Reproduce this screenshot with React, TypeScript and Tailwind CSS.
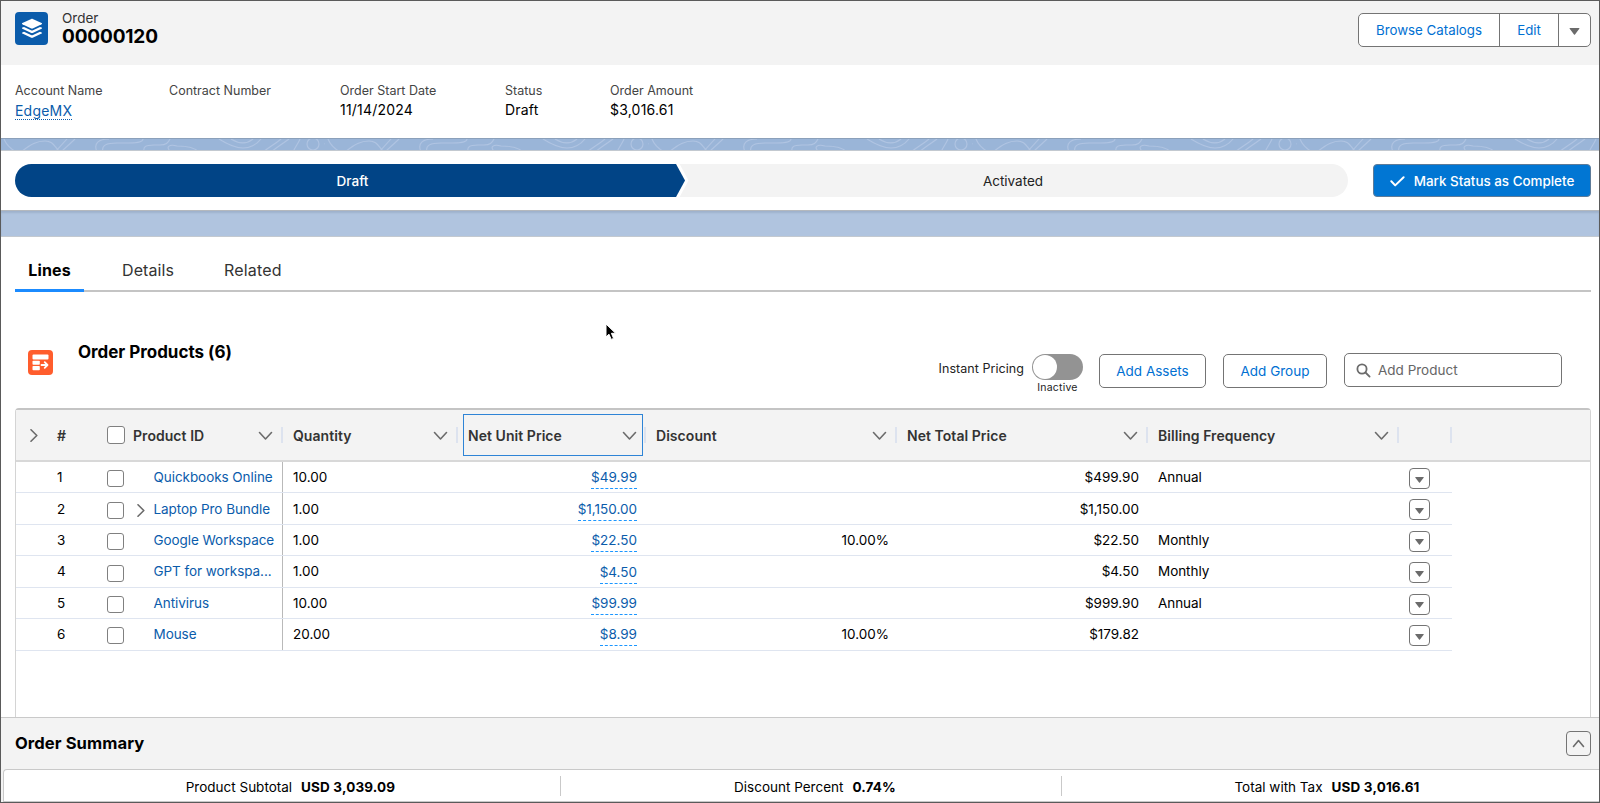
import React from 'react';
import { clsx } from 'clsx';

interface LineItem {
    id: number;
    product: string;
    quantity: string;
    unitPrice: string;
    discount?: string;
    total: string;
    billing?: string;
    bundle?: boolean;
}

const LINES: LineItem[] = [
    { id: 1, product: 'Quickbooks Online', quantity: '10.00', unitPrice: '$49.99', total: '$499.90', billing: 'Annual' },
    { id: 2, product: 'Laptop Pro Bundle', quantity: '1.00', unitPrice: '$1,150.00', total: '$1,150.00', bundle: true },
    { id: 3, product: 'Google Workspace', quantity: '1.00', unitPrice: '$22.50', discount: '10.00%', total: '$22.50', billing: 'Monthly' },
    { id: 4, product: 'GPT for workspa...', quantity: '1.00', unitPrice: '$4.50', total: '$4.50', billing: 'Monthly' },
    { id: 5, product: 'Antivirus', quantity: '10.00', unitPrice: '$99.99', total: '$999.90', billing: 'Annual' },
    { id: 6, product: 'Mouse', quantity: '20.00', unitPrice: '$8.99', discount: '10.00%', total: '$179.82' },
];

const COLUMNS = 'grid grid-cols-[267px_175px_188px_251px_251px_251px_53px]';

function Chevron({ className, d = 'M1.5 3.5 7.5 10 13.5 3.5' }: { className?: string; d?: string }) {
    return (
        <svg viewBox="0 0 15 13" className={clsx('h-[13px] w-[15px] shrink-0', className)} fill="none" stroke="#6b6b6b" strokeWidth="1.6" strokeLinecap="round" strokeLinejoin="round">
            <path d={d} />
        </svg>
    );
}

const RIGHT = 'M5 0.8 10.8 6.5 5 12.2';
const UP = 'M2.5 9.5 7.5 3.5 12.5 9.5';

function Caret({ className }: { className?: string }) {
    return (
        <svg viewBox="0 0 10 7" className={className} fill="#6b6b6b">
            <path d="M0.6 0h8.8c.5 0 .7.5.4.8L5.5 6.5c-.3.4-.7.4-1 0L.2.8C-.1.5.1 0 .6 0z" />
        </svg>
    );
}

function Checkbox({ className }: { className?: string }) {
    return <span className={clsx('block shrink-0 rounded-[3px] border border-[#808080] bg-white', className)} />;
}

/** Contour-line texture of the page background */
function Topography() {
    return (
        <svg className="block h-full w-full" fill="none" stroke="#b0c4e2" strokeWidth="1.1">
            <defs>
                <pattern id="topo" width="324" height="13" x="0" y="0" patternUnits="userSpaceOnUse">
                    <path d="M3 0c2 5 7 10 12 13M20 13C30 5 36 2 44 2s9 5 15 11M54 13 66 0M60 13 74 0M96 13c-4-9 2-13 12-13M102 13c-2-7 4-9 14-9h12c12 0 14-2 14-4M143 13c-1-5 1-7 10-7h6c6 0 8-2 10-6M170 13c-6-5-2-8 6-6 10 0 18 2 22 6M218 0c8 5 16 9 24 9s14-4 18-9M230 0c8 5 16 5 22 0M262 13c8-6 12-8 18-13M270 13c10-8 14-10 18-13" />
                    <circle cx="312" cy="5" r="6" />
                    <path d="M292 13c2-5 5-8 7-13M324 4c1 3 1 6 0 9" />
                </pattern>
            </defs>
            <rect width="100%" height="100%" fill="url(#topo)" stroke="none" />
        </svg>
    );
}

function RecordHeader() {
    return (
        <header className="flex h-16 shrink-0 justify-between bg-[#f3f3f3] pl-[14px] pr-2">
            <div className="flex pt-[11px]">
                <span className="flex size-[33px] items-center justify-center rounded-[4px] bg-[#0b5cab]">
                    <svg viewBox="0 0 22 21" className="h-[21px] w-[22px]" fill="#fff">
                        <path d="M10.3 1 1.4 5.1c-.6.3-.6.9 0 1.2l8.9 4.2c.5.2.9.2 1.4 0l8.9-4.2c.6-.3.6-.9 0-1.2L11.7 1c-.5-.2-.9-.2-1.4 0z" />
                        <path d="M1.4 9.6 3 8.9l7 3.3c.7.3 1.3.3 2 0l7-3.3 1.6.7c.6.3.6.9 0 1.2l-8.9 4.2c-.5.2-.9.2-1.4 0l-8.9-4.2c-.6-.3-.6-.9 0-1.2z" />
                        <path d="M1.4 14.4 3 13.7l7 3.3c.7.3 1.3.3 2 0l7-3.3 1.6.7c.6.3.6.9 0 1.2l-8.9 4.2c-.5.2-.9.2-1.4 0l-8.9-4.2c-.6-.3-.6-.9 0-1.2z" />
                    </svg>
                </span>
                <div className="pl-[14px] -mt-[2px]">
                    <p className="text-[13.5px] leading-[17px] text-[#333]">Order</p>
                    <h1 className="text-[19px] font-bold leading-[20px] tracking-[-0.15px]">00000120</h1>
                </div>
            </div>
            <div className="mt-3 flex h-[34px] rounded-[5px] border border-[#747474] bg-white text-[13.3px] text-[#0070d2]">
                <button className="w-[141px] border-r border-[#747474] pt-px">Browse Catalogs</button>
                <button className="w-[59px] border-r border-[#747474] pt-px">Edit</button>
                <button className="flex w-[31px] items-center justify-center pt-[2px]"><Caret className="h-[7px] w-[11px]" /></button>
            </div>
        </header>
    );
}

function Field({ label, value, link, className }: { label: string; value?: string; link?: boolean; className: string }) {
    return (
        <div className={className}>
            <p className="text-[12.5px] leading-[18px] text-[#444]">{label}</p>
            {value && (
                <p className="pt-px text-[14px] leading-[18px] tracking-[0.2px]">
                    {link ? <a className="mt-[1px] inline-block border-b border-dotted border-[#0b5cab] leading-[17px] text-[#0b5cab]">{value}</a> : value}
                </p>
            )}
        </div>
    );
}

function StatusPath() {
    return (
        <section className="flex h-[60px] shrink-0 items-center border-b border-[#b4b8bd] bg-white pl-[14px] pr-2">
            <div className="flex h-[33px] w-[1333px] overflow-hidden rounded-full bg-[#f3f3f3] text-[13.5px]">
                <div className="flex w-[670px] bg-[#014486] font-medium text-white [clip-path:polygon(0_0,661px_0,670px_50%,661px_100%,0_100%)]">
                    <span className="m-auto pl-[5px] pt-px">Draft</span>
                </div>
                <svg viewBox="0 0 14 33" className="-ml-[9px] h-[33px] w-[14px] shrink-0" fill="none" stroke="#fff" strokeWidth="3">
                    <path d="M1.4-1 10.8 16.5 1.4 34" />
                </svg>
                <span className="m-auto pr-[12px] pt-px text-[#222]">Activated</span>
            </div>
            <button className="ml-auto flex h-[33px] w-[218px] items-center justify-center rounded-[4px] border border-[#5d7b99] bg-[#0176d3] pt-px text-[13.4px] font-medium text-white">
                <svg viewBox="0 0 15 11" className="mr-[9px] h-[11px] w-[15px]" fill="none" stroke="#fff" strokeWidth="2" strokeLinecap="round" strokeLinejoin="round">
                    <path d="M1.3 5.3 5.2 9.4 13.6 1.2" />
                </svg>
                Mark Status as Complete
            </button>
        </section>
    );
}

function Tabs() {
    return (
        <nav className="mx-[14px] mr-2 flex h-[55px] shrink-0 border-b-2 border-[#c4c4c4] text-[16px] text-[#333]">
            <span className="-mb-[2px] flex w-[69px] items-center justify-center border-b-[3px] border-[#1b8bff] pt-[14px] font-bold tracking-[0.15px] text-black">Lines</span>
            <span className="ml-[38px] pt-[21px] leading-[24px] tracking-[0.1px]">Details</span>
            <span className="ml-[50px] pt-[21px] leading-[24px] tracking-[0.15px]">Related</span>
        </nav>
    );
}

function Toolbar() {
    return (
        <div className="flex h-[116px] shrink-0 pl-[27px] pr-[37px] text-[13.5px]">
            <span className="mt-[58px] flex size-[25px] items-center justify-center rounded-[4px] bg-[#ff5d2d]">
                <svg viewBox="0 0 17 17" className="size-[17px]" fill="#fff">
                    <rect x="0.5" y="0.5" width="16" height="5" rx="1" />
                    <rect x="0.5" y="6.8" width="7.3" height="4" rx="0.8" />
                    <rect x="0.5" y="12" width="7.3" height="4.3" rx="0.8" />
                    <path d="M9.5 11h5.5M12.7 8.2l2.8 2.8-2.8 2.8" fill="none" stroke="#fff" strokeWidth="1.8" strokeLinecap="round" strokeLinejoin="round" />
                </svg>
            </span>
            <h2 className="ml-[25px] mt-[48px] text-[17px] font-bold leading-[24px] tracking-[-0.02px]">Order Products (6)</h2>
            <span className="ml-auto mt-[67px] text-[12.5px] leading-[20px] tracking-[0.05px] text-[#222]">Instant Pricing</span>
            <div className="ml-[8px] mt-[62px] flex w-[51px] flex-col items-center">
                <span className="flex h-[26px] w-[51px] items-center rounded-full bg-[#939393] pl-[1px]">
                    <span className="size-6 rounded-full bg-white" />
                </span>
                <span className="pt-px text-[10.5px] leading-[14px] tracking-[0.2px] text-[#222]">Inactive</span>
            </div>
            <button className="ml-4 mt-[62px] h-[34px] w-[107px] rounded-[5px] border border-[#747474] text-[#0070d2]">Add Assets</button>
            <button className="ml-[17px] mt-[62px] h-[34px] w-[104px] rounded-[5px] border border-[#747474] text-[#0070d2]">Add Group</button>
            <div className="ml-[17px] mt-[61px] flex h-[34px] w-[218px] items-center rounded-[5px] border border-[#747474] pl-[11px] text-[#666]">
                <svg viewBox="0 0 15 15" className="mr-[7px] size-[15px]" fill="none" stroke="#6b6b6b" strokeWidth="1.8" strokeLinecap="round">
                    <circle cx="6" cy="6" r="4.6" />
                    <path d="M9.5 9.5 13.6 13.6" />
                </svg>
                Add Product
            </div>
        </div>
    );
}

function HeaderCell({ label, focused }: { label: string; focused?: boolean }) {
    return (
        <div className="flex items-center">
            <div className={clsx('flex items-center justify-between', focused ? 'ml-[5px] h-[42px] w-[180px] border border-[#2e84d6] pl-[4px] pr-[5px]' : 'w-full pl-[10px] pr-[8px]')}>
                {label}
                <Chevron />
            </div>
            <span className={clsx('h-4 w-[2px] shrink-0 bg-[#dde3ef]', focused && 'ml-auto')} />
        </div>
    );
}

function Row({ line }: { line: LineItem }) {
    return (
        <div className={clsx(COLUMNS, 'h-[31.45px] w-[1436px] border-b border-[#dfe5f0]')}>
            <div className="flex items-center border-r border-[#b9b9b9]">
                <span className="w-[91px] pl-[41px]">{line.id}</span>
                <Checkbox className="mt-[3px] size-[17px]" />
                <span className="flex w-[29.5px] justify-center pl-[4px] pt-[3px]">{line.bundle && <Chevron d={RIGHT} />}</span>
                <a className="whitespace-nowrap tracking-[-0.06px] text-[#0b5cab]">{line.product}</a>
            </div>
            <span className="self-center pl-[10px]">{line.quantity}</span>
            <div className="flex items-center justify-end pr-[9px]">
                <span className="mt-[2px] border-b border-dashed border-[#1b96ff] pb-px leading-[20px] text-[#0b5cab]">{line.unitPrice}</span>
            </div>
            <span className="self-center pr-[8px] text-right">{line.discount}</span>
            <span className="self-center pr-[9px] text-right">{line.total}</span>
            <span className="self-center pl-[10px] tracking-[-0.05px]">{line.billing}</span>
            <button className="ml-[10px] mt-[6px] flex size-[21px] items-center justify-center rounded-[4px] border border-[#747474] pt-[2px]">
                <Caret className="h-[6px] w-[9px]" />
            </button>
        </div>
    );
}

function LinesTable() {
    return (
        <div className="ml-[14px] mr-2 flex-1 rounded-t-[4px] border border-b-0 border-t-2 border-[#d4d4d4] border-t-[#c4c4c4] text-[13.5px]">
            <div className={clsx(COLUMNS, 'h-[52px] border-b-2 border-[#d8d8d8] bg-[#f3f3f3] text-[14px] font-semibold tracking-[0.05px] text-[#333]')}>
                <div className="flex items-center pl-[10px]">
                    <Chevron d={RIGHT} />
                    <span className="w-[50px] pl-[16px]">#</span>
                    <Checkbox className="ml-[16px] size-[18px]" />
                    <span className="ml-2">Product ID</span>
                    <Chevron className="ml-auto mr-[8px]" />
                    <span className="h-4 w-[2px] shrink-0 bg-[#dde3ef]" />
                </div>
                <HeaderCell label="Quantity" />
                <HeaderCell label="Net Unit Price" focused />
                <HeaderCell label="Discount" />
                <HeaderCell label="Net Total Price" />
                <HeaderCell label="Billing Frequency" />
                <span className="h-4 w-[2px] self-center justify-self-end bg-[#dde3ef]" />
            </div>
            {LINES.map(line => <Row key={line.id} line={line} />)}
        </div>
    );
}

function Total({ label, value, className }: { label: string; value: string; className: string }) {
    return (
        <div className={clsx('flex h-5 justify-center leading-[22px]', className)}>
            {label}
            <b className="ml-[9px] tracking-[0.15px]">{value}</b>
        </div>
    );
}

function OrderSummary() {
    return (
        <footer className="h-[85px] shrink-0 border-t border-[#c9c9c9] bg-[#f3f3f3] text-[13.5px]">
            <div className="flex h-[51px] items-center pl-[14px] pr-2">
                <h2 className="text-[16.6px] font-bold tracking-[0.08px]">Order Summary</h2>
                <button className="ml-auto flex size-[25px] items-center justify-center rounded-[4px] border border-[#747474]">
                    <Chevron d={UP} />
                </button>
            </div>
            <div className="ml-[2px] flex h-[33px] items-center rounded-tl-[4px] border-y border-l border-[#c9c9c9] bg-white pt-px">
                <Total className="w-[557px] border-r border-[#c9c9c9] pl-[17px]" label="Product Subtotal" value="USD 3,039.09" />
                <Total className="w-[501px] border-r border-[#c9c9c9] pl-[8px]" label="Discount Percent" value="0.74%" />
                <Total className="flex-1 pr-[7px]" label="Total with Tax" value="USD 3,016.61" />
            </div>
        </footer>
    );
}

export default function App() {
    return (
        <div className="relative flex h-[803px] w-[1600px] flex-col overflow-hidden border border-[#5a5a5a] bg-white font-['Inter','Liberation_Sans',sans-serif] text-black">
            <RecordHeader />
            <section className="flex h-[73px] shrink-0 pl-[14px] pt-[17px]">
                <Field className="w-[154px]" label="Account Name" value="EdgeMX" link />
                <Field className="w-[171px]" label="Contract Number" />
                <Field className="w-[165px]" label="Order Start Date" value="11/14/2024" />
                <Field className="w-[105px]" label="Status" value="Draft" />
                <Field className="w-[120px]" label="Order Amount" value="$3,016.61" />
            </section>
            <div className="h-[13px] shrink-0 border-y border-b-[#c3c9d0] border-t-[#8ba0ba] bg-[#9ab5d8]"><Topography /></div>
            <StatusPath />
            <div className="h-[26px] shrink-0 border-b border-[#c3c9d0] bg-[#b0c4df] shadow-[inset_0_2px_2px_#9fb2cc]" />
            <Tabs />
            <Toolbar />
            <LinesTable />
            <OrderSummary />
            <svg viewBox="0 0 12 18" className="absolute left-[604px] top-[322px] h-[18px] w-[12px]" stroke="#fff" strokeWidth="1">
                <path d="M1 1v13l3-2.8 2.2 5.2 2.4-1-2.2-5.1h4.2z" />
            </svg>
        </div>
    );
}
